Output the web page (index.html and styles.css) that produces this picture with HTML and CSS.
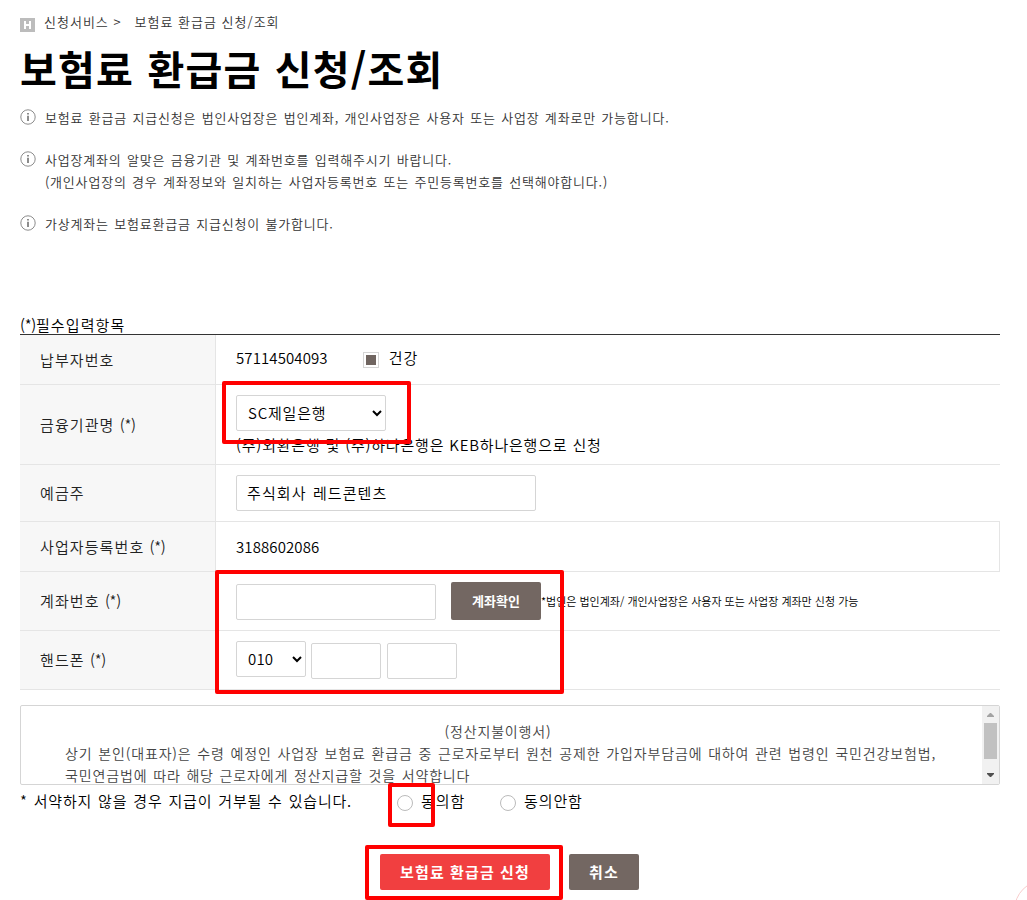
FILE: index.html
```html
<!DOCTYPE html>
<html lang="ko">
<head>
    <meta charset="utf-8">
    <title>보험료 환급금 신청/조회</title>
    <link rel="stylesheet" href="styles.css">
</head>
<body>
    <div class="location">
        <svg class="home" width="15" height="14" viewBox="0 0 15 14">
            <rect width="15" height="14" fill="#bcbcbc"/>
            <path d="M5 3v8M10 3v8M5 7h5" stroke="#fff" stroke-width="2" fill="none"/>
        </svg>
        <span class="loc-parent">신청서비스 &gt;</span>
        <span class="loc-current">보험료 환급금 신청/조회</span>
    </div>
    <h1>보험료 환급금 신청/조회</h1>

    <ul class="info">
        <li>
            <svg class="info-icon" width="16" height="16" viewBox="0 0 16 16"><circle cx="8" cy="8" r="7.2" fill="none" stroke="#8c8c8c"/><path d="M7 4h2v1.6H7zM7 6.7h2V12H7z" fill="#8c8c8c"/></svg>
            <p>보험료 환급금 지급신청은 법인사업장은 법인계좌, 개인사업장은 사용자 또는 사업장 계좌로만 가능합니다.</p>
        </li>
        <li>
            <svg class="info-icon" width="16" height="16" viewBox="0 0 16 16"><circle cx="8" cy="8" r="7.2" fill="none" stroke="#8c8c8c"/><path d="M7 4h2v1.6H7zM7 6.7h2V12H7z" fill="#8c8c8c"/></svg>
            <p>사업장계좌의 알맞은 금융기관 및 계좌번호를 입력해주시기 바랍니다.<br>(개인사업장의 경우 계좌정보와 일치하는 사업자등록번호 또는 주민등록번호를 선택해야합니다.)</p>
        </li>
        <li>
            <svg class="info-icon" width="16" height="16" viewBox="0 0 16 16"><circle cx="8" cy="8" r="7.2" fill="none" stroke="#8c8c8c"/><path d="M7 4h2v1.6H7zM7 6.7h2V12H7z" fill="#8c8c8c"/></svg>
            <p>가상계좌는 보험료환급금 지급신청이 불가합니다.</p>
        </li>
    </ul>

    <form>
        <p class="required"><span class="star">(*)</span>필수입력항목</p>
        <div class="table">
            <div class="row row-payer">
                <div class="th">납부자번호</div>
                <div class="td"><span class="num">57114504093</span><span class="check"></span><span>건강</span></div>
            </div>
            <div class="row row-bank">
                <div class="th"><span>금융기관명 <span class="star">(*)</span></span></div>
                <div class="td">
                    <select class="bank"><option>SC제일은행</option></select>
                    <p class="bank-note">(주)외환은행 및 (주)하나은행은 KEB하나은행으로 신청</p>
                </div>
            </div>
            <div class="row row-holder">
                <div class="th">예금주</div>
                <div class="td"><input type="text" class="holder" value="주식회사 레드콘텐츠"></div>
            </div>
            <div class="row row-biz">
                <div class="th"><span>사업자등록번호 <span class="star">(*)</span></span></div>
                <div class="td"><span class="num">3188602086</span></div>
            </div>
            <div class="row row-account">
                <div class="th"><span>계좌번호 <span class="star">(*)</span></span></div>
                <div class="td">
                    <input type="text" class="account">
                    <button type="button" class="btn-check">계좌확인</button>
                    <span class="account-note">*법인은 법인계좌/ 개인사업장은 사용자 또는 사업장 계좌만 신청 가능</span>
                </div>
            </div>
            <div class="row row-phone">
                <div class="th"><span>핸드폰 <span class="star">(*)</span></span></div>
                <div class="td">
                    <select class="phone-select"><option>010</option></select>
                    <input type="text" class="phone">
                    <input type="text" class="phone">
                </div>
            </div>
        </div>

        <div class="terms">
            <div class="terms-text">
                <p class="terms-title">(정산지불이행서)</p>
                <p>상기 본인(대표자)은 수령 예정인 사업장 보험료 환급금 중 근로자로부터 원천 공제한 가입자부담금에 대하여 관련 법령인 국민건강보험법,<br>국민연금법에 따라 해당 근로자에게 정산지급할 것을 서약합니다</p>
            </div>
            <div class="scrollbar">
                <svg width="7" height="4" viewBox="0 0 7 4"><path d="M0 4V3L3 0h1l3 3v1z" fill="#a3a3a3"/></svg>
                <div class="thumb"></div>
                <svg width="7" height="4" viewBox="0 0 7 4"><path d="M0 0v1l3 3h1l3-3V0z" fill="#505050"/></svg>
            </div>
        </div>

        <div class="agree">
            <span class="agree-note">* 서약하지 않을 경우 지급이 거부될 수 있습니다.</span>
            <label class="yes"><i class="radio"></i>동의함</label>
            <label class="no"><i class="radio"></i>동의안함</label>
        </div>

        <div class="buttons">
            <button type="button" class="btn-submit">보험료 환급금 신청</button>
            <button type="button" class="btn-cancel">취소</button>
        </div>
    </form>

    <div class="mark mark-bank"></div>
    <div class="mark mark-account"></div>
    <div class="mark mark-agree"></div>
    <div class="mark mark-submit"></div>
    <div class="floating"></div>
</body>
</html>
```
FILE: styles.css
```css
* {
    box-sizing: border-box;
}

body {
    position: relative;
    width: 1027px;
    height: 900px;
    margin: 0;
    padding: 11px 27px 0 20px;
    overflow: hidden;
    background: #fff;
    color: #000;
    font-family: "Noto Sans CJK KR", sans-serif;
    font-size: 15px;
    font-weight: 350;
    line-height: 23px;
    letter-spacing: 1.1px;
}

p, ul, h1 {
    margin: 0;
    padding: 0;
}

.location {
    display: flex;
    height: 23px;
    font-size: 13px;
    line-height: 22px;
    color: #333;
    letter-spacing: 1px;
}

.home {
    margin: 7px 9px 0 0;
}

.loc-current {
    margin-left: 13px;
}

h1 {
    height: 73px;
    font-size: 40px;
    font-weight: 700;
    line-height: 69px;
    letter-spacing: 1.2px;
    word-spacing: 1px;
    white-space: nowrap;
}

.info {
    list-style: none;
    height: 209px;
    font-size: 13px;
    line-height: 22px;
    color: #333;
    letter-spacing: 0.8px;
    word-spacing: 1px;
    white-space: nowrap;
}

.info li {
    display: flex;
    margin-bottom: 20px;
}

.info-icon {
    margin: 2px 9px 0 0;
}

.required {
    height: 18px;
    line-height: 18px;
}

.star {
    letter-spacing: -0.3px;
}

.table {
    border-top: 1px solid #333;
}

.row {
    display: flex;
    border-bottom: 1px solid #e5e5e5;
}

.th {
    display: flex;
    align-items: center;
    width: 196px;
    padding: 0 0 2px 20px;
    background: #f7f7f7;
    border-right: 1px solid #e5e5e5;
    color: #222;
}

.row-payer .th, .row-bank .th, .row-biz .th {
    padding-bottom: 0;
}

.td {
    display: flex;
    align-items: center;
    flex: 1;
    padding-left: 20px;
    white-space: nowrap;
}

.row-payer {
    height: 50px;
}

.row-payer .td {
    padding-bottom: 5px;
}

.row-bank {
    height: 80px;
}

.row-bank .td {
    flex-direction: column;
    align-items: flex-start;
    padding-top: 10px;
}

.bank-note {
    padding-top: 2px;
    letter-spacing: 0.8px;
}

.row-holder {
    height: 57px;
}

.row-biz {
    height: 50px;
}

.row-biz .td {
    border-right: 1px solid #e5e5e5;
}

.row-account, .row-phone {
    height: 59px;
}

.row-account .td {
    align-items: flex-start;
    padding-top: 10px;
}

.row-phone .td {
    align-items: flex-start;
    padding-top: 10px;
}

.num {
    letter-spacing: 0.1px;
}

.check {
    width: 16px;
    height: 16px;
    margin: 6px 10px 0 35px;
    border: 1px solid #d5d5d5;
    background: #706560;
    box-shadow: inset 0 0 0 2px #fff;
}

input, select {
    height: 36px;
    padding: 0 10px 2px;
    background: #fff;
    border: 1px solid #d5d5d5;
    border-radius: 2px;
    color: #000;
    font: inherit;
    letter-spacing: inherit;
}

select {
    padding: 0 0 2px 7px;
}

.bank {
    width: 150px;
    letter-spacing: 0.8px;
}

.holder {
    width: 300px;
    word-spacing: 1px;
}

.account {
    width: 200px;
    margin: 2px 15px 0 0;
}

.phone-select {
    width: 70px;
    margin-right: 5px;
    letter-spacing: 0.2px;
}

.phone {
    width: 70px;
    margin: 2px 6px 0 0;
}

button {
    padding: 0 0 2px;
    border: 0;
    border-radius: 2px;
    background: #736762;
    color: #fff;
    font: inherit;
    font-weight: 700;
    letter-spacing: 1.1px;
}

.btn-check {
    width: 90px;
    height: 38px;
    font-size: 13px;
    letter-spacing: 0;
}

.account-note {
    font-size: 11px;
    line-height: 39px;
    letter-spacing: 0;
}

.terms {
    display: flex;
    height: 80px;
    margin-top: 15px;
    border: 1px solid #d5d5d5;
    border-radius: 2px;
    overflow: hidden;
}

.terms-text {
    flex: 1;
    padding: 14px 44px 0;
    font-size: 14px;
    line-height: 22px;
    color: #444;
    letter-spacing: 0.85px;
    word-spacing: 1px;
    white-space: nowrap;
}

.terms-title {
    text-align: center;
    text-indent: -7px;
}

.scrollbar {
    display: flex;
    flex-direction: column;
    align-items: center;
    width: 17px;
    padding-top: 7px;
    background: #f1f1f1;
}

.thumb {
    width: 13px;
    height: 36px;
    margin: 6px 0 14px;
    background: #c1c1c1;
}

.agree {
    display: flex;
    height: 69px;
    padding-top: 4px;
    letter-spacing: 0.9px;
    white-space: nowrap;
}

.agree-note {
    width: 377px;
    letter-spacing: 0.8px;
    word-spacing: 1px;
}

.agree label {
    display: flex;
}

.yes {
    width: 103px;
}

.radio {
    width: 16px;
    height: 16px;
    margin: 6px 8px 0 0;
    border: 1px solid #bbb;
    border-radius: 50%;
}

.buttons {
    display: flex;
    justify-content: center;
    gap: 19px;
    padding-right: 1px;
}

.btn-submit {
    width: 170px;
    height: 36px;
    background: #f13f40;
}

.btn-cancel {
    width: 70px;
    height: 36px;
}

/* red highlight boxes over the form */
.mark {
    position: absolute;
    border: 4px solid #f00;
    border-radius: 2px;
}

.mark-bank {
    left: 222px;
    top: 381px;
    width: 189px;
    height: 63px;
}

.mark-account {
    left: 215px;
    top: 570px;
    width: 349px;
    height: 124px;
}

.mark-agree {
    left: 388px;
    top: 783px;
    width: 47px;
    height: 44px;
}

.mark-submit {
    left: 365px;
    top: 845px;
    width: 198px;
    height: 55px;
}

.floating {
    position: absolute;
    left: 1014px;
    top: 880px;
    width: 60px;
    height: 60px;
    border: 1px solid #f8cccc;
    border-radius: 50%;
}
```
